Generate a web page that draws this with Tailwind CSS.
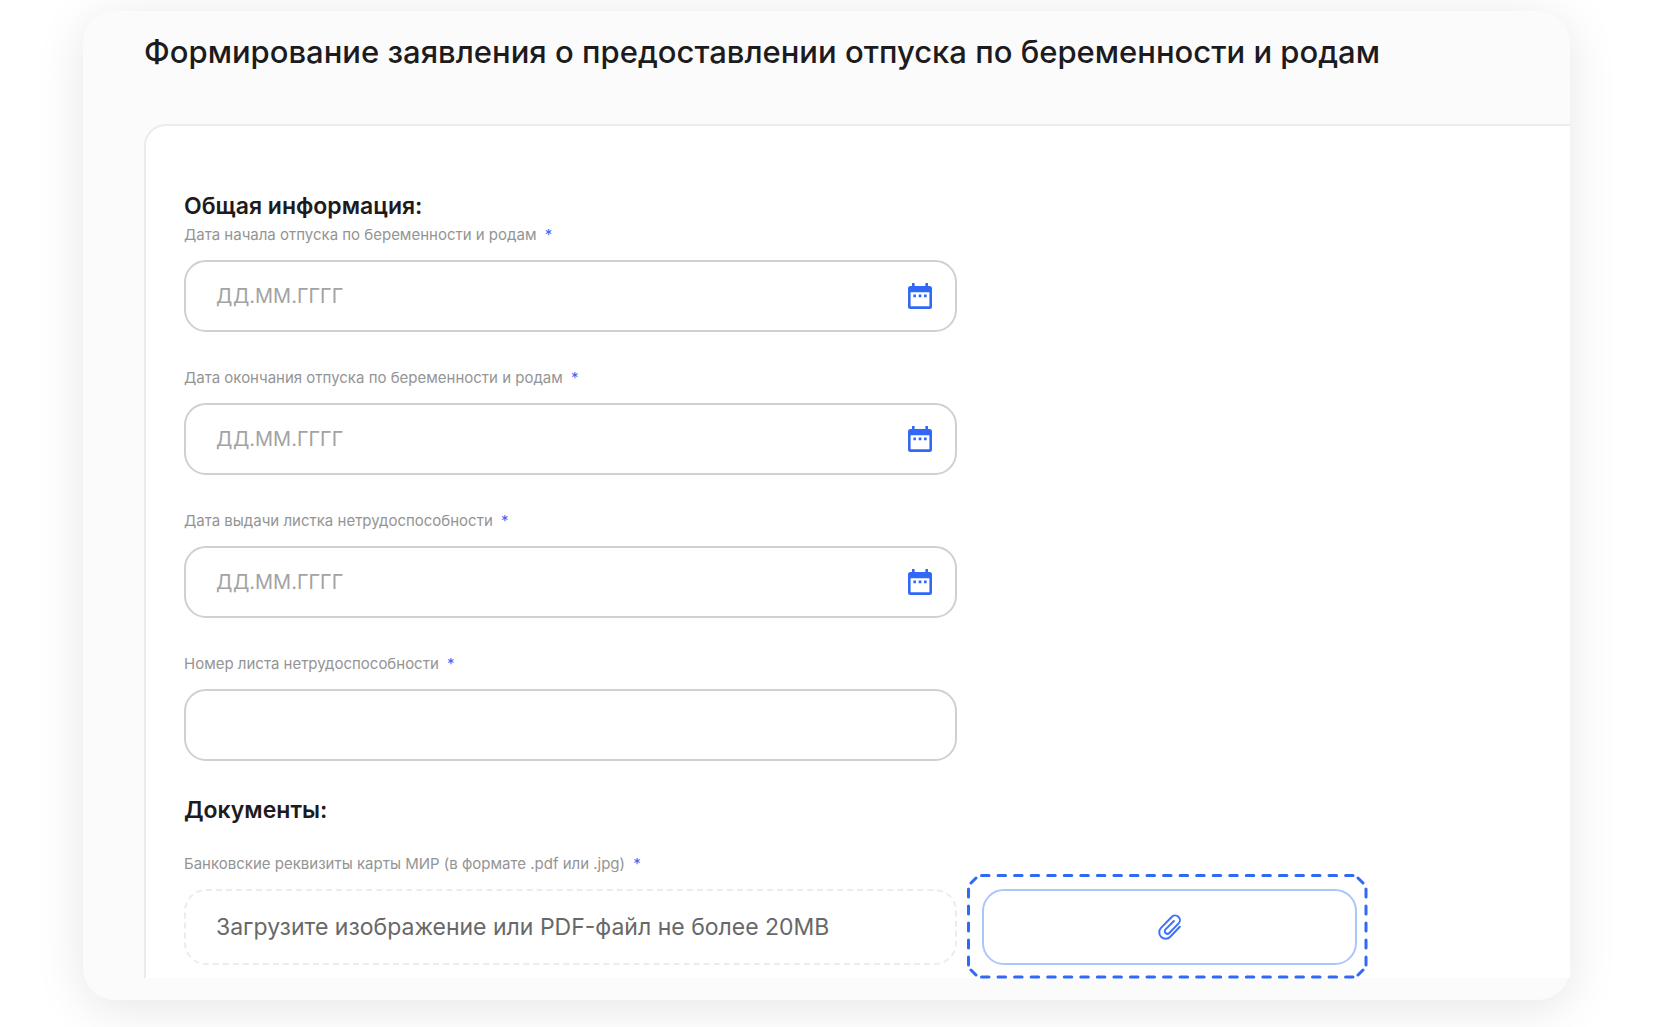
<!DOCTYPE html>
<html lang="ru">
<head>
<meta charset="utf-8">
<meta name="viewport" content="width=device-width, initial-scale=1">
<title>Заявление о предоставлении отпуска</title>
<script src="https://cdn.jsdelivr.net/npm/@tailwindcss/browser@4"></script>
</head>
<body class="bg-white px-[83px] pt-[11px] pb-[27px] font-['Inter',sans-serif] text-[#1d1b20] overflow-x-hidden">
<svg class="hidden">
  <symbol id="calendar" viewBox="0 0 24 26">
    <path fill="#3268f6" fill-rule="evenodd" d="M4 0h2.600v3h10.800V0H20v3h1.500A2.500 2.500 0 0 1 24 5.500v18a2.500 2.500 0 0 1-2.500 2.500h-19A2.500 2.500 0 0 1 0 23.500v-18A2.500 2.500 0 0 1 2.500 3H4zM2.600 9.300v14h18.800v-14zM5.400 11.500H8v2.800H5.400zM10.700 11.500h2.700v2.800h-2.700zM16 11.500h2.700v2.800H16z"/>
  </symbol>
</svg>
<main class="rounded-[32px] bg-[#fbfbfb] pl-[61px] pb-[22px] shadow-[0_8px_50px_rgba(0,0,0,0.10)]">
  <h1 class="pt-5 text-[31px] leading-[42px] font-medium">Формирование заявления о предоставлении отпуска по беременности и родам</h1>
  <form class="mt-[51px] rounded-tl-[22px] border-l-2 border-t-2 border-[#e9ebee] bg-white pl-[38px] pt-[64px]">
    <section class="w-[773px] max-w-full">
      <h2 class="text-[23px] leading-8 font-semibold">Общая информация:</h2>
      <div class="flex flex-col gap-[33px]">
        <div>
          <label for="start" class="block h-[38px] text-[15px] leading-[26px] text-[#949494]">Дата начала отпуска по беременности и родам <span class="ml-1 text-[#3268f6]">*</span></label>
          <div class="flex h-[72px] items-center rounded-[22px] border-2 border-[#d0d0d0] pl-[30px] pr-[23px]">
            <input id="start" type="text" placeholder="ДД.ММ.ГГГГ" class="min-w-0 flex-1 text-xl outline-none placeholder:text-[#a3a3a3]">
            <button type="button" aria-label="Открыть календарь"><svg class="h-[26px] w-6"><use href="#calendar"/></svg></button>
          </div>
        </div>
        <div>
          <label for="end" class="block h-[38px] text-[15px] leading-[26px] text-[#949494]">Дата окончания отпуска по беременности и родам <span class="ml-1 text-[#3268f6]">*</span></label>
          <div class="flex h-[72px] items-center rounded-[22px] border-2 border-[#d0d0d0] pl-[30px] pr-[23px]">
            <input id="end" type="text" placeholder="ДД.ММ.ГГГГ" class="min-w-0 flex-1 text-xl outline-none placeholder:text-[#a3a3a3]">
            <button type="button" aria-label="Открыть календарь"><svg class="h-[26px] w-6"><use href="#calendar"/></svg></button>
          </div>
        </div>
        <div>
          <label for="issued" class="block h-[38px] text-[15px] leading-[26px] text-[#949494]">Дата выдачи листка нетрудоспособности <span class="ml-1 text-[#3268f6]">*</span></label>
          <div class="flex h-[72px] items-center rounded-[22px] border-2 border-[#d0d0d0] pl-[30px] pr-[23px]">
            <input id="issued" type="text" placeholder="ДД.ММ.ГГГГ" class="min-w-0 flex-1 text-xl outline-none placeholder:text-[#a3a3a3]">
            <button type="button" aria-label="Открыть календарь"><svg class="h-[26px] w-6"><use href="#calendar"/></svg></button>
          </div>
        </div>
        <div>
          <label for="number" class="block h-[38px] text-[15px] leading-[26px] text-[#949494]">Номер листа нетрудоспособности <span class="ml-1 text-[#3268f6]">*</span></label>
          <input id="number" type="text" class="block h-[72px] w-full rounded-[22px] border-2 border-[#d0d0d0] px-[30px] text-xl outline-none">
        </div>
      </div>
    </section>
    <section class="pt-[33px]">
      <h2 class="text-[23px] leading-8 font-semibold">Документы:</h2>
      <label for="card" class="mt-[25px] block h-[38px] text-[15px] leading-[26px] text-[#949494]">Банковские реквизиты карты МИР (в формате .pdf или .jpg) <span class="ml-1 text-[#3268f6]">*</span></label>
      <div class="flex gap-[25px] pb-[13px]">
        <input id="card" type="text" readonly placeholder="Загрузите изображение или PDF-файл не более 20MB" class="h-[76px] w-[773px] min-w-0 rounded-[22px] border-2 border-dashed border-[#ececec] px-[30px] text-[23px] outline-none placeholder:text-[#686868]">
        <div class="relative w-[375px] shrink-0">
          <button type="button" aria-label="Прикрепить файл" class="flex h-[76px] w-full items-center justify-center rounded-[22px] border-2 border-[#a9c8fa]">
            <svg class="h-[26px] w-6" viewBox="0 0 24 26" fill="none" stroke="#3f72f7" stroke-width="2" stroke-linecap="round" stroke-linejoin="round"><path d="M21.800 12.700 12.300 22.700a6.400 6.400 0 0 1-9.300-8.800L13.700 3a4.700 4.700 0 0 1 6.900 6.400L11.300 19a2.600 2.600 0 0 1-3.800-3.600L15.900 7"/></svg>
          </button>
          <svg class="pointer-events-none absolute -left-4 -top-4 h-[106px] w-[402px]" viewBox="0 0 402 106" fill="none" stroke="#3268f6" stroke-width="3" stroke-linecap="round">
            <path stroke-dasharray="7.500 9.050" d="M15.500 2.500H387M15.500 104H387"/>
            <path stroke-dasharray="8 9" d="M2.500 16v76M400 16v76"/>
            <path d="M5 10l5-5M397 10l-5-5M5 97l5 5M397 97l-5 5"/>
          </svg>
        </div>
      </div>
    </section>
  </form>
</main>
</body>
</html>
